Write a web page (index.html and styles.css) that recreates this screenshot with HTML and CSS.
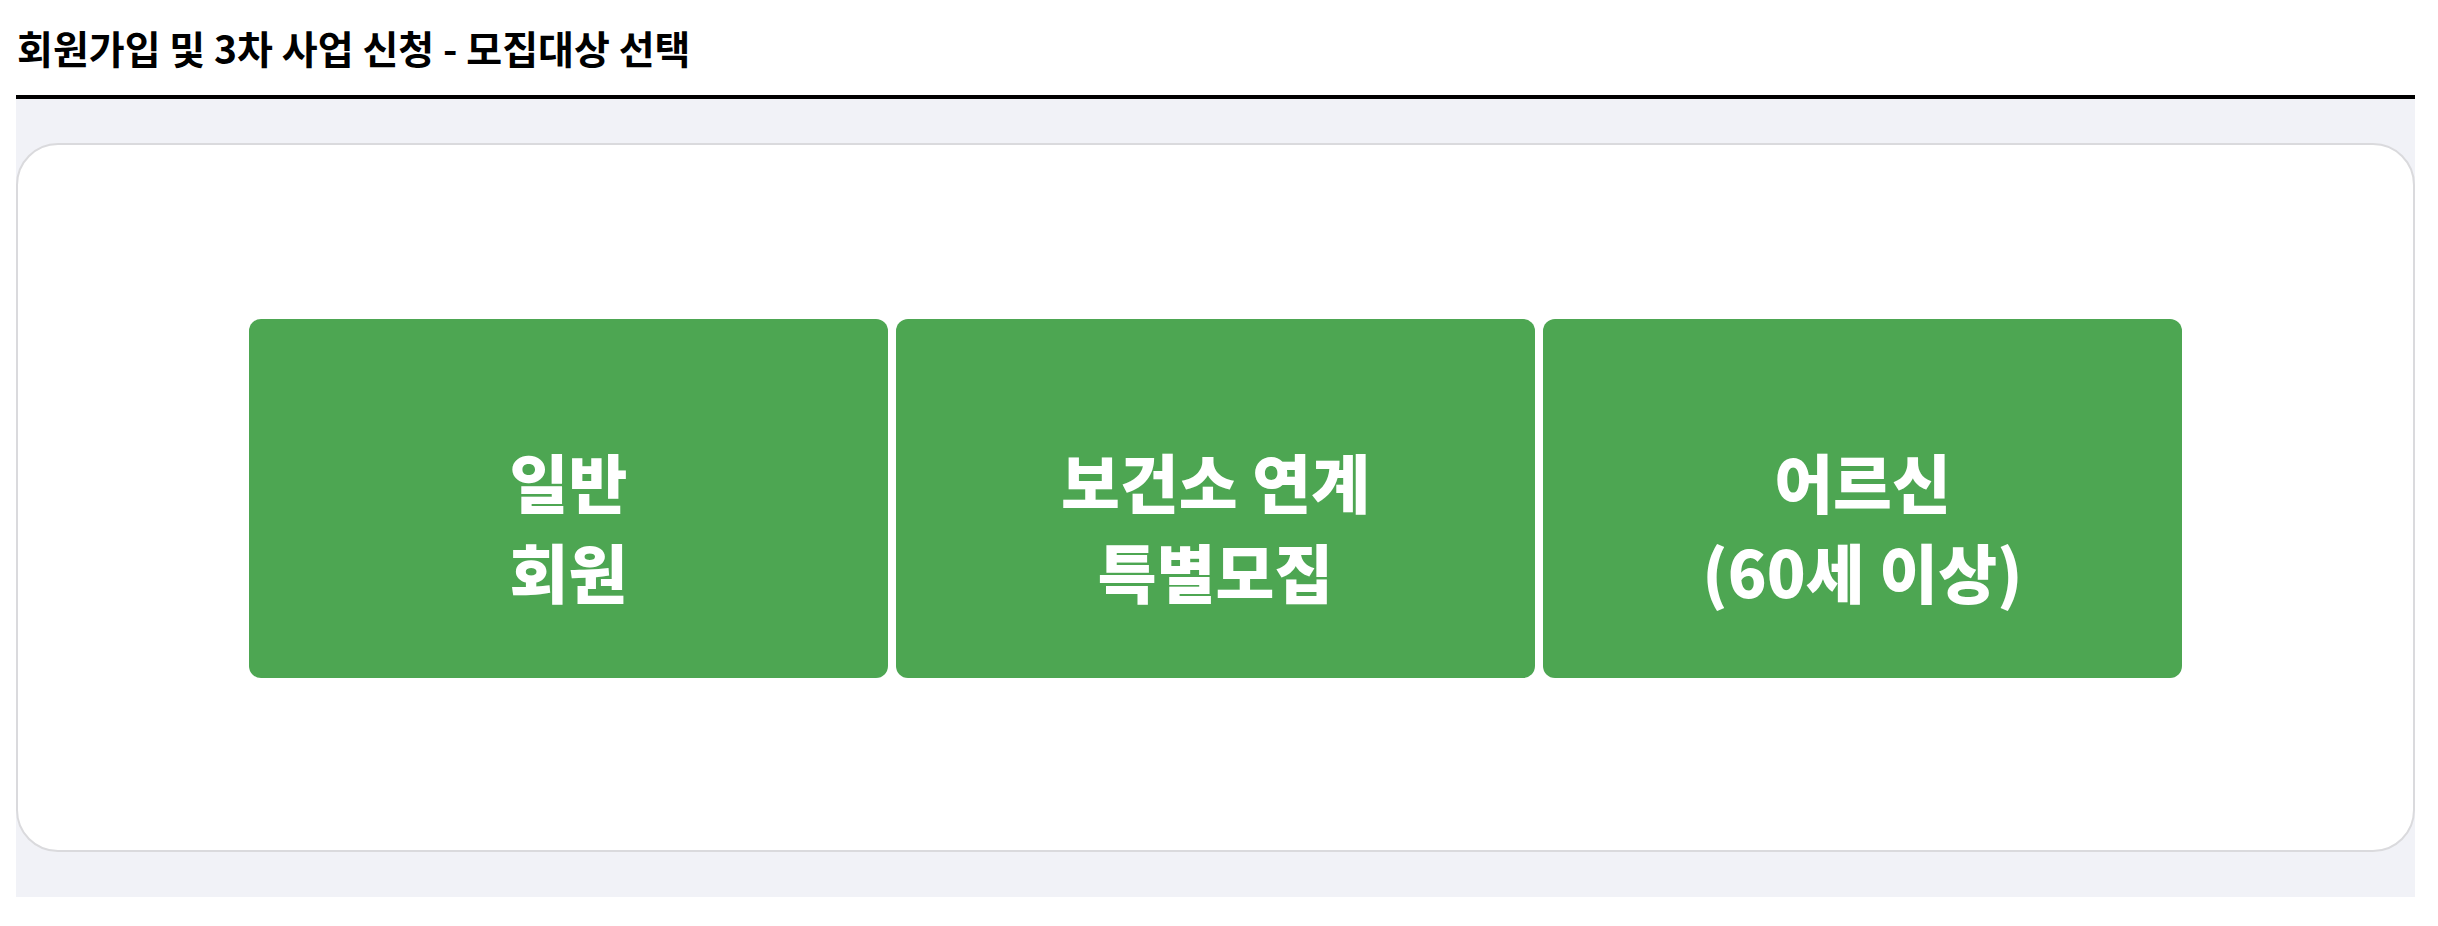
FILE: index.html
```html
<!DOCTYPE html>
<html>
    <head>
        <title> 모집대상 선택 </title>

        <link rel="stylesheet" href="styles.css">
    </head>
    <body>
        <div class="page">
            <p class="title">회원가입 및 3차 사업 신청 - 모집대상 선택</p>

            <div class="panel">
                <div class="card">
                    <div class="choices">
                        <button class="choice">일반<br>회원</button>
                        <button class="choice">보건소 연계<br>특별모집</button>
                        <button class="choice">어르신<br>(60세 이상)</button>
                    </div>
                </div>
            </div>
        </div>
    </body>
</html>
```

FILE: styles.css
```css
body{
    margin:0;
    background-color:white;
    color:black;
    font-family:"Noto Sans CJK KR", "Noto Sans", sans-serif;
}

.page{
    padding:0 23px 0 16px;
}

.title{
    margin:0;
    height:99px;
    line-height:95px;
    padding-left:1px;
    font-size:39px;
    font-weight:bold;
    border-bottom:4px solid black;
    box-sizing:border-box;
}

.panel{
    background-color:rgb(241,242,247);
    padding:44px 0 45px 0;
}

.card{
    background-color:white;
    border:2px solid rgb(218,218,221);
    border-radius:42px;
    padding:174px 0 172px 0;
}

.choices{
    display:flex;
    justify-content:center;
    gap:8px;
}

.choice{
    width:639px;
    height:359px;
    padding:53px 0 0 0;
    background-color:rgb(77,166,82);
    color:white;
    border:none;
    border-radius:12px;
    font-family:"Noto Sans CJK KR", "Noto Sans", sans-serif;
    font-size:64px;
    font-weight:800;
    line-height:90px;
    cursor:pointer;
}
```
